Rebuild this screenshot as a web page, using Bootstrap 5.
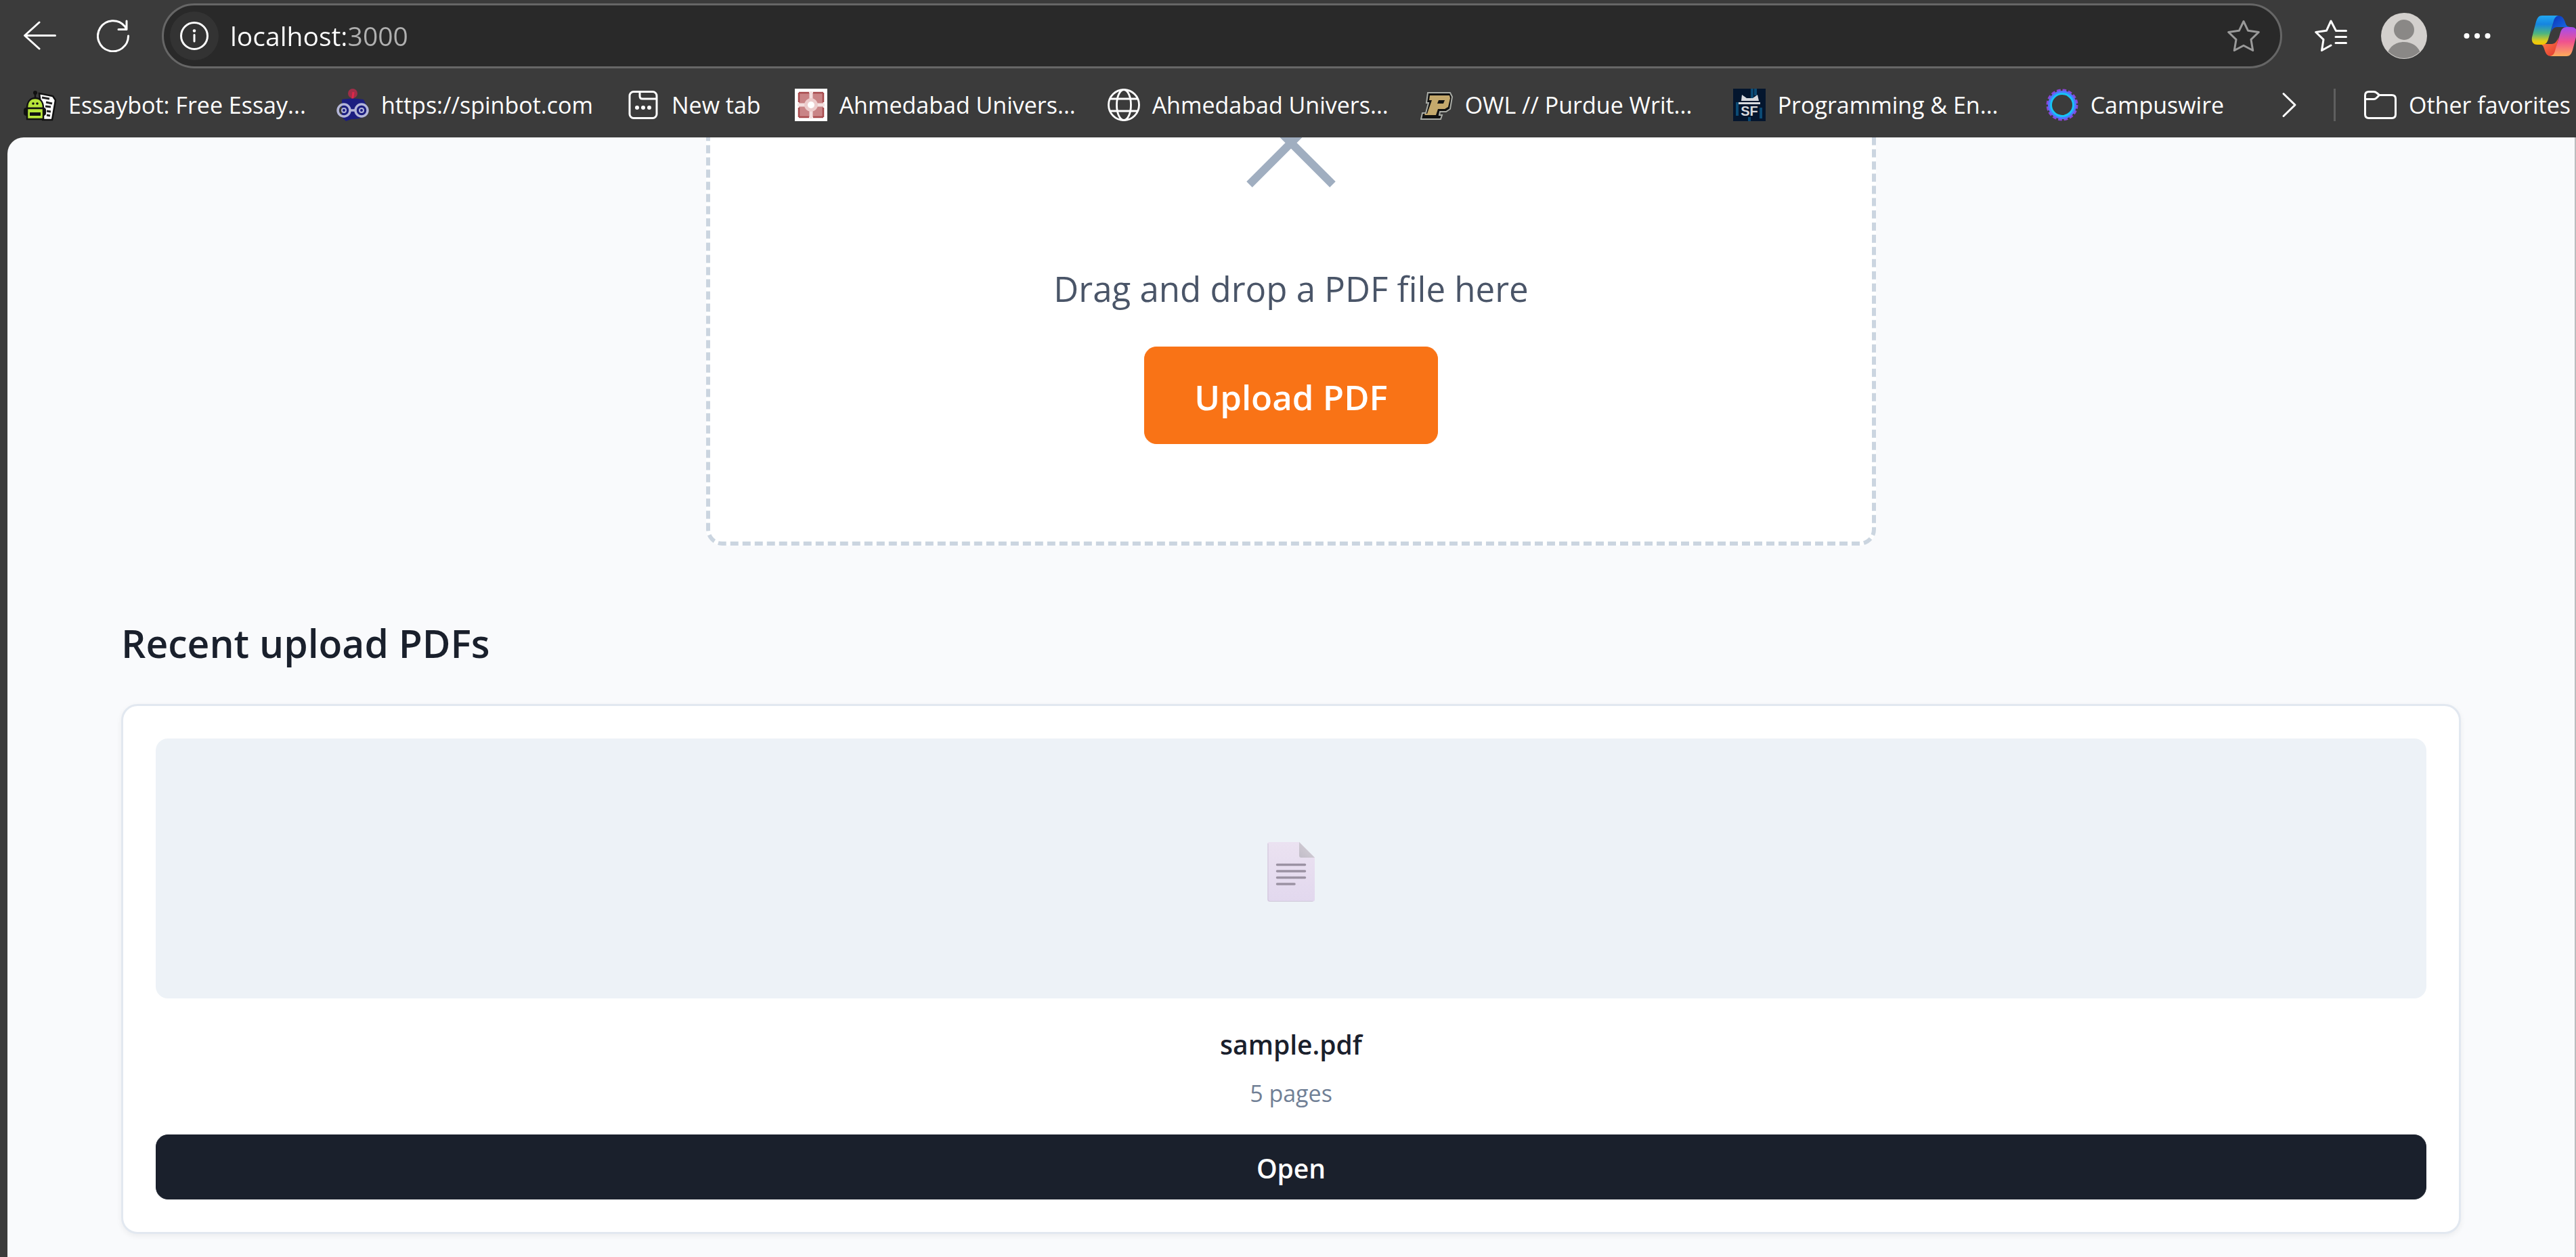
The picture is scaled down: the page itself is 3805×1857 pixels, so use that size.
<!DOCTYPE html>
<html lang="en">
<head>
<meta charset="utf-8">
<meta name="viewport" content="width=device-width, initial-scale=1">
<title>localhost:3000</title>
<link href="https://cdn.jsdelivr.net/npm/bootstrap@5.3.0/dist/css/bootstrap.min.css" rel="stylesheet">
<style>
  :root { --chrome: #3b3b3b; --ink: #1a202c; }
  body { background: var(--chrome); font-family: "Open Sans", "Noto Sans", sans-serif; color: var(--ink); }
  .ico { width: 48px; height: 48px; flex: none; display: block; }
  .bare { background: none; border: 0; padding: 0; color: #fff; flex: none; }

  /* Browser toolbar */
  .toolbar { height: 106px; gap: 48px; padding-left: 35px; }
  .reload { margin-left: 12px; }
  .address { height: 96px; border: 3px solid #666; background: #292929; padding: 0 30px 0 9px; gap: 17px; }
  .site-info { width: 72px; height: 72px; background: #333; }
  .url-box {
    min-width: 0; padding: 0; border: 0; outline: 0; font-size: 39px; line-height: 56px; color: transparent;
    background: linear-gradient(90deg, #fff 170px, #b0b0b0 170px); -webkit-background-clip: text; background-clip: text;
  }
  .avatar { width: 72px; height: 72px; }
  .copilot { width: 84px; height: 84px; margin-right: -10px; }

  /* Favorites bar */
  .favorites { height: 97px; padding: 0 8px 0 35px; font-size: 34px; line-height: 48px; gap: 42px; }
  .fav-list { gap: 48px; }
  .fav-link { gap: 18px; color: #fff; text-decoration: none; white-space: nowrap; }
  .fav-name { padding-right: 2px; }
  .fav-wide { width: 348px; }
  .bar-rule { width: 3px; height: 48px; background: #5f5f5f; }

  /* Page */
  .page { margin-left: 11px; background: #f9fafc; border-right: 2px solid #bbbcbe; border-top-left-radius: 24px; }
  .content { max-width: 3456px; }
  .dropzone { max-width: 1728px; margin-top: -238px; padding: 144px; border: 6px dashed #cbd5e0; border-radius: 24px; background: #fff; }
  .drop-icon { width: 192px; height: 192px; margin-bottom: 81px; }
  .drop-text { font-size: 51px; line-height: 76px; margin-bottom: 48px; color: #4a5568; }
  .btn-upload { --bs-btn-color: #fff; --bs-btn-bg: #f97316; --bs-btn-border-color: #f97316; --bs-btn-hover-color: #fff; --bs-btn-hover-bg: #ea6a10; --bs-btn-font-weight: 600; height: 144px; padding: 4px 73px 0; border-radius: 18px; font-size: 51px; }
  .recent-title { font-size: 57px; line-height: 84px; font-weight: 600; margin: 102px 0 48px; }
  .doc-card { border: 3px solid #e2e8f0; border-radius: 24px; padding: 48px; box-shadow: 0 3px 9px rgba(0,0,0,.06); color: var(--ink); }
  .thumb { height: 384px; padding-top: 10px; background: #edf2f7; border-radius: 18px; }
  .doc-icon { width: 96px; height: 96px; }
  .doc-name { font-size: 39px; line-height: 64px; font-weight: 600; margin: 36px 0 12px; }
  .doc-pages { font-size: 34px; line-height: 56px; margin-bottom: 33px; color: #718096; }
  .btn-open { --bs-btn-color: #fff; --bs-btn-bg: #1a202c; --bs-btn-border-color: #1a202c; --bs-btn-hover-color: #fff; --bs-btn-hover-bg: #2d3748; --bs-btn-font-weight: 600; height: 96px; padding: 4px 48px 0; border-radius: 18px; font-size: 39px; }
</style>
<script src="https://cdn.jsdelivr.net/npm/bootstrap@5.3.0/dist/js/bootstrap.bundle.min.js"></script>
</head>
<body class="d-flex flex-column vh-100 overflow-hidden">

<header class="flex-shrink-0 overflow-hidden">
  <div class="toolbar d-flex align-items-center">
    <button class="bare" type="button" aria-label="Back">
      <svg class="ico" viewBox="0 0 48 48" fill="none" stroke="#fff" stroke-width="3" stroke-linecap="round" stroke-linejoin="round"><path d="M23 4 1.500 23.500 23 43M2 23.500H46.500"/></svg>
    </button>
    <button class="bare reload" type="button" aria-label="Reload">
      <svg class="ico" viewBox="0 0 48 48" fill="none" stroke="#fff" stroke-width="3" stroke-linecap="round" stroke-linejoin="round"><path d="M46.500 24A22.500 22.500 0 1 1 41 9.500L44 14M44 2V14.500H32"/></svg>
    </button>
    <form class="address d-flex align-items-center flex-grow-1 rounded-pill">
      <button class="bare site-info rounded-circle d-flex align-items-center justify-content-center" type="button" aria-label="Site information">
        <svg class="ico" viewBox="0 0 48 48" fill="none" stroke="#fff" stroke-width="3" stroke-linecap="round"><circle cx="24" cy="24" r="19.500"/><path d="M24 22.500V32"/><circle cx="24" cy="16.500" r="2.300" fill="#fff" stroke="none"/></svg>
      </button>
      <input class="url-box flex-grow-1" type="text" value="localhost:3000" aria-label="Address">
      <button class="bare" type="button" aria-label="Add to favorites">
        <svg class="ico" viewBox="0 0 48 48" fill="none" stroke="#9a9a9a" stroke-width="3" stroke-linejoin="round"><path d="M24 2.500 30.600 16.300 46.300 18.500 35 29.400 37.700 45.500 24 38.200 10.300 45.500 13 29.400 1.700 18.500 17.400 16.300Z"/></svg>
      </button>
    </form>
    <button class="bare" type="button" aria-label="Favorites">
      <svg class="ico" viewBox="0 0 48 48" fill="none" stroke="#fff" stroke-width="3" stroke-linecap="round" stroke-linejoin="round"><path d="M46.500 16.500H31.500L24 2 17.400 16.300 1.700 18.500 13 29.400 10.500 45.500 24 38M31 25.500H46.500M31 34.500H46.500"/></svg>
    </button>
    <button class="bare" type="button" aria-label="Profile">
      <svg class="avatar d-block" viewBox="0 0 72 72"><defs><clipPath id="face"><circle cx="36" cy="36" r="33"/></clipPath></defs><circle cx="36" cy="36" r="34" fill="#d3d0cd"/><g clip-path="url(#face)" fill="#8a8886"><circle cx="36" cy="27" r="15"/><path d="M10 72C10 54 22 45 36 45s26 9 26 27Z"/></g></svg>
    </button>
    <button class="bare" type="button" aria-label="Settings and more">
      <svg class="ico" viewBox="0 0 48 48" fill="#fff"><circle cx="8.500" cy="24" r="4"/><circle cx="24" cy="24" r="4"/><circle cx="39.500" cy="24" r="4"/></svg>
    </button>
    <button class="bare copilot" type="button" aria-label="Copilot">
      <svg class="d-block" width="84" height="84" viewBox="0 0 84 84">
        <defs>
          <linearGradient id="cpA" x1="0" y1="0" x2="0" y2="1"><stop offset="0" stop-color="#22a7f0"/><stop offset=".3" stop-color="#1585e0"/><stop offset=".62" stop-color="#4fb67e"/><stop offset=".88" stop-color="#e5cc16"/><stop offset="1" stop-color="#f7c600"/></linearGradient>
          <linearGradient id="cpB" x1="0" y1="0" x2="1" y2="1"><stop offset="0" stop-color="#0c2fb4"/><stop offset="1" stop-color="#1a7df2"/></linearGradient>
          <linearGradient id="cpC" x1="0" y1="0" x2="0" y2="1"><stop offset="0" stop-color="#a34df0"/><stop offset=".5" stop-color="#f0528e"/><stop offset="1" stop-color="#ffac5a"/></linearGradient>
          <linearGradient id="cpD" x1="0" y1="0" x2="1" y2="1"><stop offset="0" stop-color="#ff8a4a"/><stop offset="1" stop-color="#e2352f"/></linearGradient>
        </defs>
        <path d="M46 12C54 12 56 16 58 22s3 6 8 7H46C41 29 38 33 36 39L42 15Z" fill="url(#cpB)"/>
        <path d="M38 72C30 72 29 67 27 61s-3-6-8-7H38C43 54 46 50 48 44L44 66Z" fill="url(#cpD)"/>
        <path d="M24 12H48C44 13 42 16 41 20L33 47C31.500 52 29 55 24 55H17C10 55 8 50 9 44L15 21C17 15 19 12 24 12Z" fill="url(#cpA)"/>
        <path d="M60 72H36C40 71 42 68 43 64L51 37C52.500 32 55 29 60 29H67C74 29 76 34 75 40L69 63C67 69 65 72 60 72Z" fill="url(#cpC)"/>
      </svg>
    </button>
  </div>

  <nav class="favorites d-flex align-items-center" aria-label="Favorites bar">
    <ul class="fav-list d-flex list-unstyled mb-0 me-auto">
      <li><a class="fav-link d-flex align-items-center" href="#">
        <svg class="ico" viewBox="0 0 48 48"><path d="M23 7 43 11 47 17 42 46H28Z" fill="#fff" stroke="#111" stroke-width="2.500"/><path d="M27 13 38 15M33 20l9 2M32 26l8 1M34 33l6 1M34 39l5 1" stroke="#222" stroke-width="3"/><path d="M17 8V15" stroke="#111" stroke-width="2.500"/><circle cx="17" cy="6" r="3" fill="#111"/><path d="M5 29C5 19 10 14 17 14s12 5 12 15Z" fill="#b7e53a" stroke="#111" stroke-width="2.500"/><rect x="0" y="28" width="33" height="12" rx="4" fill="#111"/><path d="M5 29H29V45H5Z" fill="#b7e53a" stroke="#111" stroke-width="2.500"/><rect x="9" y="35" width="16" height="5" fill="#111"/><circle cx="14" cy="22" r="1.800" fill="#111"/><circle cx="20" cy="22" r="1.800" fill="#111"/></svg>
        <span class="fav-name fav-wide">Essaybot: Free Essay...</span></a></li>
      <li><a class="fav-link d-flex align-items-center" href="#">
        <svg class="ico" viewBox="0 0 48 48"><ellipse cx="24" cy="7" rx="7" ry="7" fill="#a02e48"/><path d="M25 5 23 20" stroke="#e0284a" stroke-width="3"/><path d="M8 16Q24 13 40 16L44 24V38Q40 45 22 45L14 48 8 42Z" fill="#1c1e80"/><g fill="none" stroke="#b4b6d8" stroke-width="3.500"><circle cx="11" cy="32" r="9"/><circle cx="37" cy="32" r="9"/><circle cx="11" cy="32" r="3" stroke-width="2"/><circle cx="37" cy="32" r="3" stroke-width="2"/><path d="M19 32H29"/></g></svg>
        <span class="fav-name">https://spinbot.com</span></a></li>
      <li><a class="fav-link d-flex align-items-center" href="#">
        <svg class="ico" viewBox="0 0 48 48" fill="none" stroke="#fff" stroke-width="3"><rect x="4" y="4.500" width="40" height="39" rx="6"/><path d="M19 5V11Q19 15 23 15H44"/><g fill="#fff" stroke="none"><circle cx="15" cy="28" r="3"/><circle cx="24" cy="28" r="3"/><circle cx="33" cy="28" r="3"/></g></svg>
        <span class="fav-name">New tab</span></a></li>
      <li><a class="fav-link d-flex align-items-center" href="#">
        <svg class="ico" viewBox="0 0 48 48"><path d="M0 0H48V48H0Z" fill="#fff"/><path d="M6 6H42V42H6Z" fill="#c98486"/><path d="M6 6H21M27 6H42M6 42H21M27 42H42M6 6V20M42 6V20M6 28V42M42 28V42" stroke="#a84a4d" stroke-width="2.500"/><path d="M24 4V44M4 24H44" stroke="#f3dfdf" stroke-width="5"/><circle cx="24" cy="24" r="10" fill="#eccccc"/><circle cx="24" cy="24" r="5" fill="#fff"/></svg>
        <span class="fav-name fav-wide">Ahmedabad Univers...</span></a></li>
      <li><a class="fav-link d-flex align-items-center" href="#">
        <svg class="ico" viewBox="0 0 48 48" fill="none" stroke="#fff" stroke-width="2.800"><circle cx="24" cy="24" r="22.500"/><ellipse cx="24" cy="24" rx="10.500" ry="22.500"/><path d="M4 15H44M4 33H44"/></svg>
        <span class="fav-name fav-wide">Ahmedabad Univers...</span></a></li>
      <li><a class="fav-link d-flex align-items-center" href="#">
        <svg class="ico" viewBox="0 0 48 48"><path d="M11 6H44L47 12 44 30 38 34H29L28 39H32L30 45H1L3 36H8L12 21H9Z" fill="#111" stroke="#a9aca6" stroke-width="2"/><path d="M14 10H43L44 14 41 27 36 30H26L23 39H6L7 37H10L17 17H13Z" fill="#c5a96c"/><path d="M27 17H36L34 22H25Z" fill="#111"/></svg>
        <span class="fav-name fav-wide">OWL // Purdue Writ...</span></a></li>
      <li><a class="fav-link d-flex align-items-center" href="#">
        <svg class="ico" viewBox="0 0 48 48"><path d="M0 0H48V48H0Z" fill="#04162e"/><path d="M28 0V14M33 0V10M24 42V48M6 20V40M41 28V44" stroke="#0b4a74" stroke-width="4"/><path d="M8 20H40V23H8ZM12 18 13 9 20 14H29L36 9 38 18Z" fill="#d8dade"/><text x="24" y="40" text-anchor="middle" font-family="Liberation Sans, sans-serif" font-weight="700" font-size="20" fill="#d8dade">SF</text></svg>
        <span class="fav-name fav-wide">Programming &amp; En...</span></a></li>
      <li><a class="fav-link d-flex align-items-center" href="#">
        <svg class="ico" viewBox="0 0 48 48" fill="none"><circle cx="24" cy="24" r="21" stroke="#8a46d8" stroke-width="5" stroke-dasharray="5.500 2.740"/><circle cx="24" cy="24" r="19" stroke="#4c78ff" stroke-width="4"/><circle cx="24" cy="24" r="16.500" stroke="#16c4f4" stroke-width="3"/></svg>
        <span class="fav-name">Campuswire</span></a></li>
    </ul>
    <button class="bare" type="button" aria-label="More favorites">
      <svg class="ico" viewBox="0 0 48 48" fill="none" stroke="#fff" stroke-width="3" stroke-linecap="round" stroke-linejoin="round"><path d="M16 7.500 33 24 16 40.500"/></svg>
    </button>
    <div class="bar-rule"></div>
    <a class="fav-link d-flex align-items-center" href="#">
      <svg class="ico" viewBox="0 0 48 48" fill="none" stroke="#fff" stroke-width="3" stroke-linejoin="round"><path d="M1.500 10Q1.500 4.500 7 4.500H14Q17 4.500 19 6.500L22.500 9.500H41Q46.500 9.500 46.500 15V38Q46.500 43.500 41 43.500H7Q1.500 43.500 1.500 38ZM2 15.500H14Q16.500 15.500 18 14L22.500 9.500"/></svg>
      <span>Other favorites</span></a>
  </nav>
</header>

<main class="page flex-grow-1 overflow-hidden">
  <div class="content mx-auto">
    <section class="dropzone mx-auto d-flex flex-column align-items-center">
      <svg class="drop-icon flex-shrink-0" viewBox="0 0 192 192" stroke="#a0aec0" stroke-width="12" aria-hidden="true"><path d="M34.500 34.500 157.500 157.500M157.500 34.500 34.500 157.500"/></svg>
      <p class="drop-text">Drag and drop a PDF file here</p>
      <button class="btn btn-upload" type="button">Upload PDF</button>
    </section>

    <section>
      <h2 class="recent-title">Recent upload PDFs</h2>
      <article class="card doc-card text-center">
        <div class="thumb d-flex align-items-center justify-content-center">
          <svg class="doc-icon" viewBox="0 0 96 96" aria-hidden="true">
            <defs>
              <linearGradient id="sheet" x1="0" y1="0" x2="0" y2="1"><stop offset="0" stop-color="#ebe2f1"/><stop offset="1" stop-color="#e2d8ee"/></linearGradient>
              <linearGradient id="fold" x1="0" y1="1" x2="1" y2="0"><stop offset="0" stop-color="#c2bdc8"/><stop offset="1" stop-color="#d6d2d9"/></linearGradient>
            </defs>
            <path d="M16 4H60L83 27V89Q83 92 80 92H16Q13 92 13 89V7Q13 4 16 4Z" fill="url(#sheet)"/>
            <path d="M14 6V89Q14 91.500 17 91.500H80" fill="none" stroke="#cfc6d9"/>
            <path d="M60 4 83 27H63Q60 27 60 24Z" fill="url(#fold)"/>
            <path d="M27.500 37.500H68.500M27.500 47H68.500M27.500 56.500H68.500M27.500 66H53" stroke="#9b92a3" stroke-width="3.500" stroke-linecap="round"/>
          </svg>
        </div>
        <h3 class="doc-name">sample.pdf</h3>
        <p class="doc-pages">5 pages</p>
        <button class="btn btn-open w-100" type="button">Open</button>
      </article>
    </section>
  </div>
</main>
</body>
</html>
